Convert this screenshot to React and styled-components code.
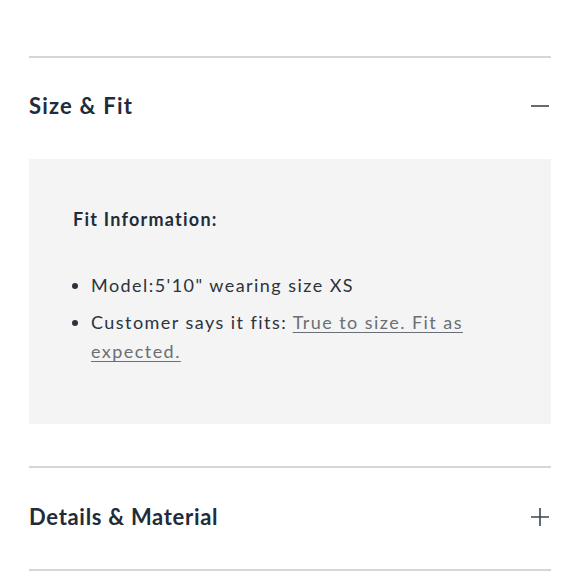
import React from "react";
import styled, { createGlobalStyle } from "styled-components";

const Global = createGlobalStyle`
  html, body { margin: 0; padding: 0; background: #fff; }
  body { font-family: Lato, "Open Sans", sans-serif; }
`;

const Page = styled.div`
  padding: 56px 29px 0;
`;

const Section = styled.section`
  border-top: 2px solid #d6d6d6;
  &:last-child { border-bottom: 2px solid #d6d6d6; }
`;

const Header = styled.div`
  display: flex;
  align-items: flex-start;
  justify-content: space-between;
  box-sizing: border-box;
  height: ${(p) => p.$h}px;
  padding-top: ${(p) => p.$top}px;
`;

const Title = styled.h2`
  margin: 0;
  font-size: 22px;
  line-height: 26px;
  font-weight: 700;
  letter-spacing: ${(p) => p.$ls || 0.8}px;
  color: #1f2c3b;
`;

const Icon = styled.svg`
  width: 18px;
  height: 18px;
  margin: 4px 2px 0 0;
  stroke: #3d4650;
  stroke-width: 1.6;
`;

const Panel = styled.div`
  background: #f4f4f4;
  padding: 47px 44px 58px;
  margin-bottom: 42px;
`;

const PanelTitle = styled.h3`
  margin: 0 0 39px;
  font-size: 18px;
  font-weight: 700;
  letter-spacing: 1.25px;
  color: #1f2c3b;
  line-height: 26px;
`;

const List = styled.ul`
  margin: 0;
  padding: 0 0 0 18px;
  font-size: 18px;
  line-height: 29px;
  letter-spacing: 1.45px;
  color: #2c333c;
  li { margin-bottom: 8px; padding-left: 0; }
  li:last-child { margin-bottom: 0; }
`;

const Link = styled.a`
  color: #6a6f75;
  text-decoration: underline;
  text-underline-offset: 3px;
`;

export default function App() {
  return (
    <>
      <Global />
      <Page>
        <Section>
          <Header $h={101} $top={35}>
            <Title $ls={1.2}>Size &amp; Fit</Title>
            <Icon viewBox="0 0 18 18"><path d="M0 9h18" /></Icon>
          </Header>
          <Panel>
            <PanelTitle>Fit Information:</PanelTitle>
            <List>
              <li>Model:5'10" wearing size XS</li>
              <li>
                Customer says it fits: <Link href="#">True to size. Fit as expected.</Link>
              </li>
            </List>
          </Panel>
        </Section>
        <Section>
          <Header $h={101} $top={36}>
            <Title $ls={0.7}>Details &amp; Material</Title>
            <Icon viewBox="0 0 18 18"><path d="M0 9h18M9 0v18" /></Icon>
          </Header>
        </Section>
      </Page>
    </>
  );
}
